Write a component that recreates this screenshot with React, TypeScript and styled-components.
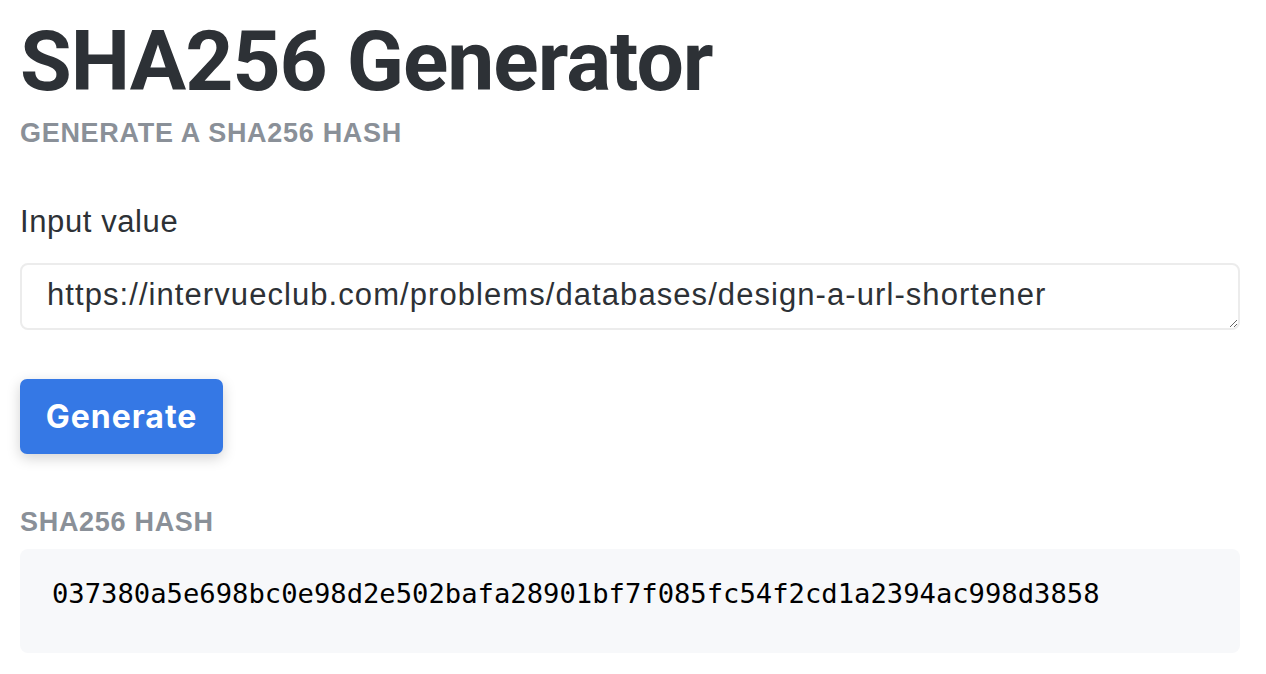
import styled, { createGlobalStyle } from "styled-components";

const GlobalStyle = createGlobalStyle`
    body {
        margin: 0;
        background: #ffffff;
        font-family: "Liberation Sans", Arial, sans-serif;
        color: #2d3136;
    }
`;

const Page = styled.div`
    padding: 0 26px 0 20px;
    display: flex;
    flex-direction: column;
`;

const Title = styled.h1`
    margin: 20px 0 0;
    font-family: Roboto, "Liberation Sans", sans-serif;
    font-size: 84px;
    font-weight: 700;
    line-height: 84px;
    letter-spacing: -1px;
    color: #2d3136;
`;

const Caption = styled.div<{ $gap: number }>`
    margin-top: ${props => props.$gap}px;
    font-size: 27px;
    line-height: 32px;
    font-weight: 700;
    letter-spacing: 0.7px;
    color: #8a9098;
    text-transform: uppercase;
`;

const Label = styled.label`
    margin-top: 55px;
    font-size: 31px;
    line-height: 36px;
    letter-spacing: 0.6px;
    color: #2d3136;
`;

const InputBox = styled.textarea`
    margin-top: 23px;
    height: 67px;
    box-sizing: border-box;
    padding: 12px 26px 0 25px;
    border: 2px solid #ececec;
    border-radius: 8px;
    font-family: "Liberation Sans", Arial, sans-serif;
    font-size: 31px;
    line-height: 36px;
    letter-spacing: 1.07px;
    color: #2d3136;
    resize: vertical;
    overflow: hidden;
    outline: none;
`;

const GenerateButton = styled.button`
    align-self: flex-start;
    margin-top: 49px;
    width: 203px;
    height: 75px;
    border: none;
    border-radius: 7px;
    background: #3578e5;
    color: #ffffff;
    font-family: Inter, sans-serif;
    font-size: 32px;
    font-weight: 700;
    letter-spacing: 1px;
    box-shadow: 0 4px 14px rgba(0, 0, 0, 0.18);
    cursor: pointer;
`;

const HashBox = styled.div`
    margin-top: 11px;
    height: 104px;
    box-sizing: border-box;
    padding: 29px 32px 0;
    background: #f7f8fa;
    border-radius: 8px;
    font-family: "DejaVu Sans Mono", monospace;
    font-size: 27.2px;
    line-height: 32px;
    color: #000000;
`;

const hash = "037380a5e698bc0e98d2e502bafa28901bf7f085fc54f2cd1a2394ac998d3858";

export default function App() {
    return (
        <>
            <GlobalStyle />
            <Page>
                <Title>SHA256 Generator</Title>
                <Caption $gap={13}>Generate a SHA256 hash</Caption>
                <Label>Input value</Label>
                <InputBox defaultValue="https://intervueclub.com/problems/databases/design-a-url-shortener" rows={1} />
                <GenerateButton>Generate</GenerateButton>
                <Caption $gap={52}>SHA256 hash</Caption>
                <HashBox>{hash}</HashBox>
            </Page>
        </>
    );
}
